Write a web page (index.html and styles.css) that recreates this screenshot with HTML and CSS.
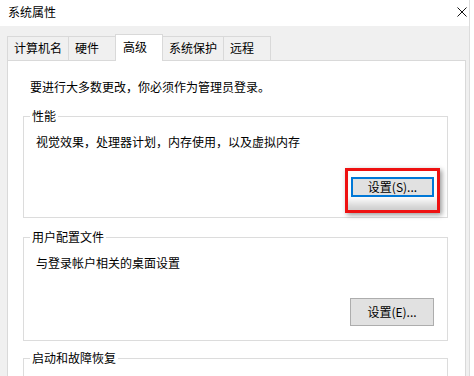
FILE: index.html
```html
<!DOCTYPE html>
<html lang="zh-CN">
<head>
<meta charset="utf-8">
<title>系统属性</title>
<link rel="stylesheet" href="styles.css">
</head>
<body>
<div class="window">
  <div class="titlebar">
    <span class="title">系统属性</span>
    <svg class="close" width="10" height="10" viewBox="0 0 10 10"><path d="M0.5 0.5L9.5 9.5M9.5 0.5L0.5 9.5" stroke="#111" stroke-width="1" fill="none"/></svg>
  </div>
  <div class="tabs">
    <div class="tab">计算机名</div>
    <div class="tab">硬件</div>
    <div class="tab active">高级</div>
    <div class="tab">系统保护</div>
    <div class="tab">远程</div>
  </div>
  <div class="panel">
    <div class="note">要进行大多数更改，你必须作为管理员登录。</div>
    <div class="group group-perf">
      <span class="legend">性能</span>
      <div class="desc">视觉效果，处理器计划，内存使用，以及虚拟内存</div>
      <div class="btn-row btn-row-perf">
        <div class="highlight">
          <div class="btn btn-focus">设置(S)...</div>
        </div>
      </div>
    </div>
    <div class="group group-profile">
      <span class="legend">用户配置文件</span>
      <div class="desc">与登录帐户相关的桌面设置</div>
      <div class="btn-row btn-row-profile">
        <div class="btn">设置(E)...</div>
      </div>
    </div>
    <div class="group group-startup">
      <span class="legend">启动和故障恢复</span>
      <div class="desc desc-startup">系统启动、系统故障和调试信息</div>
    </div>
  </div>
</div>
</body>
</html>
```
FILE: styles.css
```css
* { box-sizing: border-box; }
html, body { margin: 0; padding: 0; }
body {
  background: #ffffff;
  font-family: "Noto Sans CJK SC", "Microsoft YaHei", sans-serif;
  font-size: 12px;
  color: #000;
  overflow: hidden;
}
.window {
  width: 470px;
  height: 376px;
  background: #f0f0f0;
  border-right: 1px solid #dcdcdc;
  overflow: hidden;
}
.titlebar {
  height: 26px;
  background: #ffffff;
  display: flex;
  align-items: center;
  justify-content: space-between;
  padding: 0 2px 2px 8px;
  line-height: 18px;
}
.close { display: block; }
.tabs {
  display: flex;
  align-items: flex-end;
  height: 26px;
  margin-top: 8px;
  padding-left: 7px;
}
.tab {
  height: 24px;
  min-width: 48px;
  padding: 0 6px;
  line-height: 22px;
  border: 1px solid #d9d9d9;
  border-bottom: none;
  margin-right: -1px;
  background: #f0f0f0;
  white-space: nowrap;
}
.tab.active {
  height: 27px;
  line-height: 23px;
  padding: 0 7px;
  background: #ffffff;
  margin-bottom: -1px;
  position: relative;
  z-index: 1;
}
.panel {
  margin-left: 7px;
  width: 459px;
  height: 330px;
  background: #ffffff;
  border: 1px solid #d9d9d9;
  padding: 17px 17px 0 15px;
}
.note {
  line-height: 18px;
  padding-left: 7px;
}
.group {
  position: relative;
  width: 425px;
  border: 1px solid #dcdcdc;
  padding: 16px 13px 0 12px;
}
.group-perf { margin-top: 20px; height: 102px; }
.group-profile { margin-top: 19px; height: 104px; }
.group-startup { margin-top: 17px; height: 80px; padding-top: 15px; }
.legend {
  position: absolute;
  top: -10px;
  left: 6px;
  padding: 0 2px;
  line-height: 18px;
  background: #ffffff;
}
.desc { line-height: 18px; }
.desc-startup { color: #555; }
.btn-row {
  display: flex;
  justify-content: flex-end;
}
.btn-row-perf { margin-top: 17px; margin-right: -6px; }
.btn-row-profile { margin-top: 26px; }
.highlight {
  border: 3px solid #ee1111;
  padding: 6px 3px 13px 3px;
  background: #ffffff;
  box-shadow: 2px 2px 5px rgba(0, 0, 0, 0.4), inset 0 -13px 10px -6px rgba(0, 0, 0, 0.2);
}
.btn {
  width: 84px;
  height: 28px;
  border: 1px solid #adadad;
  background: #e1e1e1;
  display: flex;
  align-items: center;
  justify-content: center;
  line-height: 16px;
}
.btn-focus {
  width: 83px;
  height: 20px;
  border: 2px solid #0078d7;
}
```
